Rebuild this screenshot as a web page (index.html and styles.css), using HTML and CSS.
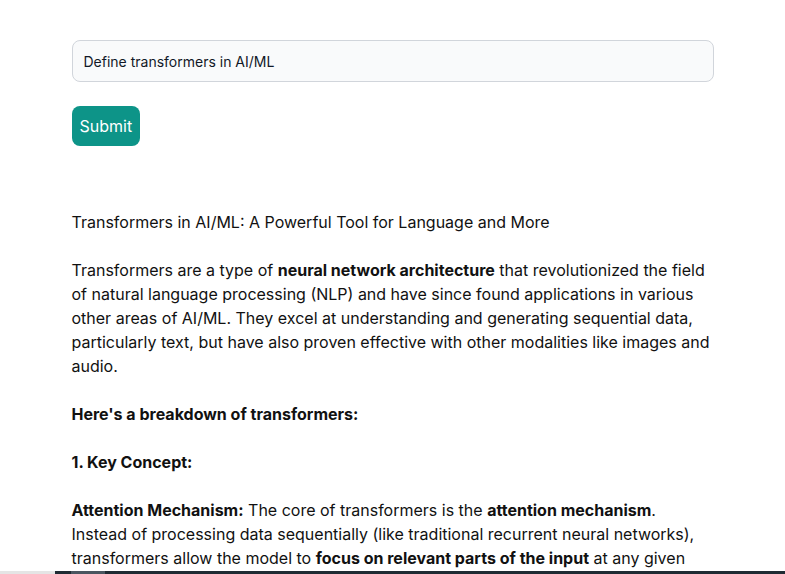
FILE: index.html
```html
<!DOCTYPE html>
<html>
<head>
<meta charset="utf-8">
<link rel="stylesheet" href="styles.css">
</head>
<body>
<main class="page">
  <form class="ask">
    <input class="ask-input" type="text" value="Define transformers in AI/ML">
    <button class="ask-btn" type="button">Submit</button>
  </form>
  <article class="answer">
    <p>Transformers in AI/ML: A Powerful Tool for Language and More</p>
    <p>Transformers are a type of <b>neural network architecture</b> that revolutionized the field of natural language processing (NLP) and have since found applications in various other areas of AI/ML. They excel at understanding and generating sequential data, particularly text, but have also proven effective with other modalities like images and audio.</p>
    <p><b>Here's a breakdown of transformers:</b></p>
    <p><b>1. Key Concept:</b></p>
    <p><b>Attention Mechanism:</b> The core of transformers is the <b>attention mechanism</b>. Instead of processing data sequentially (like traditional recurrent neural networks), transformers allow the model to <b>focus on relevant parts of the input</b> at any given point, capturing long-range dependencies and context more effectively.</p>
  </article>
</main>
<div class="taskbar"><span class="tb-start"></span><span class="tb-dark"><span class="tb-app"></span></span></div>
</body>
</html>
```
FILE: styles.css
```css
html, body { margin: 0; padding: 0; background: #fff; overflow: hidden; }
body { font-family: Inter, "Noto Sans", sans-serif; color: #111; height: 574px; }
.page { width: 642px; margin: 0 auto; padding-top: 40px; }
.ask { display: flex; flex-direction: column; align-items: flex-start; gap: 24px; margin: 0; }
.ask-input {
  box-sizing: border-box; width: 100%; height: 42px; padding: 0 11px;
  border: 1px solid #d1d5db; border-radius: 8px; background: #f9fafb;
  font-family: Inter, sans-serif; font-size: 14px; color: #111827; outline: none;
}
.ask-btn {
  box-sizing: border-box; height: 40px; padding: 0 8px; border: 0; border-radius: 8px;
  background: #0d9488; color: #fff; font-family: Inter, sans-serif; font-size: 16px;
}
.answer { margin-top: 64px; font-size: 16px; line-height: 24px; }
.answer p { margin: 0 0 24px; }
.answer b { font-weight: 700; }
.taskbar { position: fixed; left: 0; right: 0; bottom: 0; height: 3px; display: flex; }
.tb-start { width: 55px; background: #e5e5e5; }
.tb-dark { flex: 1; background: #1f2b33; display: flex; }
.tb-app { width: 34px; margin-left: 16px; background: #4a5660; }
```
